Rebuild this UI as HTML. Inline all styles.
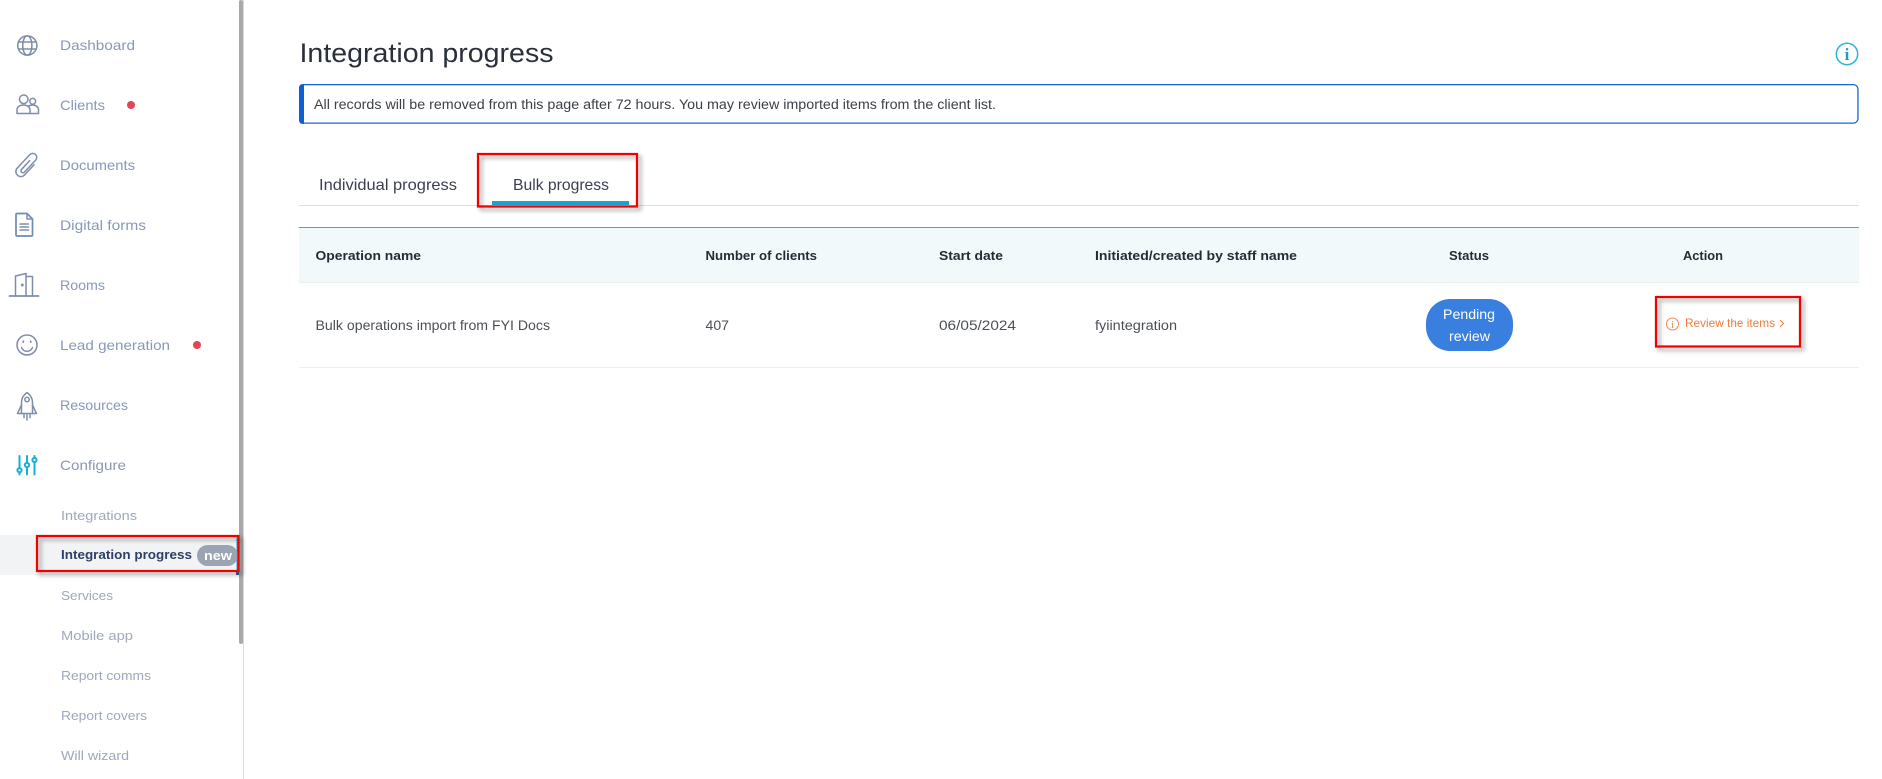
<!DOCTYPE html>
<html lang="en">
<head>
<meta charset="utf-8">
<title>Integration progress</title>
<style>
html,body{margin:0;padding:0;background:#fff;width:1882px;height:779px;overflow:hidden}
svg{display:block}
text{font-family:"Liberation Sans",sans-serif}
.n{font-size:14px;fill:#8899b5}
.s{font-size:13px;fill:#9ca8bc}
.h{font-size:13px;font-weight:bold;fill:#262c36}
.c{font-size:13.5px;fill:#4b4f57}
.i{fill:none;stroke:#7d8dac;stroke-width:1.500;stroke-linecap:round;stroke-linejoin:round}
.red{filter:drop-shadow(3px 3px 2px rgba(0,0,0,.38))}
</style>
</head>
<body>
<svg width="1882" height="779" viewBox="0 0 1882 779" xmlns="http://www.w3.org/2000/svg">
<rect width="1882" height="779" fill="#fff"/>

<!-- sidebar structure -->
<rect x="0" y="535" width="238" height="40" fill="#f1f3f5"/>
<rect x="243" y="0" width="1" height="779" fill="#d6d9e2"/>
<rect x="239" y="0" width="4" height="644" rx="2" fill="#a9a9a9"/>
<rect x="236.500" y="535" width="1.500" height="36" fill="#1aa9d4"/>
<rect x="236" y="571" width="3" height="4" fill="#3d5a8c"/>

<!-- sidebar icons -->
<g class="i">
  <circle cx="27.300" cy="45.500" r="9.600"/>
  <ellipse cx="27.300" cy="45.500" rx="4.600" ry="9.600"/>
  <path d="M18.500 42h17.600M18.500 49h17.600"/>

  <circle cx="23.700" cy="99.300" r="4.300"/>
  <circle cx="32.700" cy="101.300" r="2.900"/>
  <path d="M17 113.500v-3.500c0-3 2.500-5 6.500-5s6.500 2 6.500 5v3.500zM28 106.500c1.300-1 3-1.500 4.500-1.500 3.500 0 6 2 6 5v3.500H30"/>

  <g transform="translate(27 165) rotate(43)">
    <path d="M5 -5V9a5 5 0 0 1-10 0V-9.500a4 4 0 0 1 8 0V7a2 2 0 0 1-4 0V-5"/>
  </g>

  <path d="M17.500 213.500H27l5.500 5.500v16c0 .6-.4 1-1 1H17c-.6 0-1-.4-1-1v-20.500c0-.6.4-1 1.500-1z" stroke="#6f8ab5" stroke-width="1.700"/>
  <path d="M27 213.500v5.500h5.500M20 224h8.500M20 227h8.500M20 230h8.500"/>

  <path d="M9.500 296h29" stroke-width="1.800"/>
  <path d="M15.500 296v-20l10.500-2.500V296M26 276.500h6.500V296"/>
  <circle cx="22.300" cy="285" r=".7"/>

  <circle cx="27" cy="345" r="10"/>
  <path d="M21.500 347.500c1.200 2.700 3.300 3.800 5.500 3.800s4.300-1.100 5.500-3.800"/>
  <path d="M23.300 341.300v.8M30.700 341.300v.8" stroke-width="1.800"/>

  <path d="M27 392.500c3.500 2.500 5.500 6 5.500 10v11h-11v-11c0-4 2-7.500 5.500-10z"/>
  <circle cx="27" cy="399.500" r="2.200"/>
  <path d="M21.500 405l-4 8.500h4M32.500 405l4 8.500h-4M27 414.500v5.500M24 414.500v3M30 414.500v3"/>
</g>
<g fill="none" stroke="#1aaedb" stroke-width="2" stroke-linecap="round">
  <path d="M19.500 456v12M19.500 472.500v2M27 456v7M27 467.500v7M34.500 456v2M34.500 462.500v12"/>
  <circle cx="19.500" cy="470.200" r="2.100"/>
  <circle cx="27" cy="465" r="2.100"/>
  <circle cx="34.500" cy="460" r="2.100"/>
</g>

<!-- sidebar text -->
<text class="n" x="60" y="50" textLength="75" lengthAdjust="spacingAndGlyphs">Dashboard</text>
<text class="n" x="60" y="110" textLength="45" lengthAdjust="spacingAndGlyphs">Clients</text>
<circle cx="131" cy="105" r="4" fill="#df4656"/>
<text class="n" x="60" y="170" textLength="75" lengthAdjust="spacingAndGlyphs">Documents</text>
<text class="n" x="60" y="230" textLength="86" lengthAdjust="spacingAndGlyphs">Digital forms</text>
<text class="n" x="60" y="290" textLength="45" lengthAdjust="spacingAndGlyphs">Rooms</text>
<text class="n" x="60" y="350" textLength="110" lengthAdjust="spacingAndGlyphs">Lead generation</text>
<circle cx="197" cy="345" r="4" fill="#df4656"/>
<text class="n" x="60" y="410" textLength="68" lengthAdjust="spacingAndGlyphs">Resources</text>
<text class="n" x="60" y="470" textLength="66" lengthAdjust="spacingAndGlyphs">Configure</text>

<text class="s" x="61" y="520" textLength="76" lengthAdjust="spacingAndGlyphs">Integrations</text>
<text class="s" x="61" y="559" textLength="131" lengthAdjust="spacingAndGlyphs" style="fill:#2f4068;font-weight:bold">Integration progress</text>
<rect x="197" y="545" width="41" height="21" rx="10.500" fill="#9aa4b2"/>
<text x="204" y="560" font-size="13" font-weight="bold" fill="#fff" textLength="28" lengthAdjust="spacingAndGlyphs">new</text>
<text class="s" x="61" y="600" textLength="52" lengthAdjust="spacingAndGlyphs">Services</text>
<text class="s" x="61" y="640" textLength="72" lengthAdjust="spacingAndGlyphs">Mobile app</text>
<text class="s" x="61" y="680" textLength="90" lengthAdjust="spacingAndGlyphs">Report comms</text>
<text class="s" x="61" y="720" textLength="86" lengthAdjust="spacingAndGlyphs">Report covers</text>
<text class="s" x="61" y="760" textLength="68" lengthAdjust="spacingAndGlyphs">Will wizard</text>

<!-- heading -->
<text x="299.500" y="62" font-size="27" fill="#2a2f3c" textLength="254" lengthAdjust="spacingAndGlyphs">Integration progress</text>
<circle cx="1847" cy="54" r="10.700" fill="none" stroke="#2fb3dd" stroke-width="1.500"/>
<text x="1847" y="60" text-anchor="middle" font-size="17" font-weight="bold" fill="#1c9cc9" style="font-family:'Liberation Serif',serif">i</text>

<!-- alert -->
<rect x="299.650" y="84.650" width="1558.300" height="38.500" rx="4.500" fill="#fff" stroke="#1766d6" stroke-width="1.300"/>
<path d="M304 84v40h-1c-2.500 0-4-1.500-4-4V88c0-2.500 1.500-4 4-4z" fill="#0d5fd3"/>
<text x="314" y="109" font-size="13.500" fill="#3c4048" textLength="682" lengthAdjust="spacingAndGlyphs">All records will be removed from this page after 72 hours. You may review imported items from the client list.</text>

<!-- tabs -->
<rect x="299" y="205" width="1560" height="1" fill="#dedede"/>
<text x="319" y="190" font-size="16" fill="#3a404e" textLength="138" lengthAdjust="spacingAndGlyphs">Individual progress</text>
<text x="513" y="190" font-size="16" fill="#3a404e" textLength="96" lengthAdjust="spacingAndGlyphs">Bulk progress</text>
<rect x="492" y="201" width="137" height="4" fill="#17a5cd"/>

<!-- table -->
<rect x="299" y="228" width="1560" height="54" fill="#f2f9fb"/>
<rect x="299" y="227" width="1560" height="1" fill="#4aa5c5"/>
<rect x="299" y="282" width="1560" height="1" fill="#eceef0"/>
<rect x="299" y="367" width="1560" height="1" fill="#eceef0"/>

<text class="h" x="315.500" y="260" textLength="105.500" lengthAdjust="spacingAndGlyphs">Operation name</text>
<text class="h" x="705.500" y="260" textLength="111.500" lengthAdjust="spacingAndGlyphs">Number of clients</text>
<text class="h" x="939" y="260" textLength="64" lengthAdjust="spacingAndGlyphs">Start date</text>
<text class="h" x="1095" y="260" textLength="202" lengthAdjust="spacingAndGlyphs">Initiated/created by staff name</text>
<text class="h" x="1449" y="260" textLength="40" lengthAdjust="spacingAndGlyphs">Status</text>
<text class="h" x="1683" y="260" textLength="40" lengthAdjust="spacingAndGlyphs">Action</text>

<text class="c" x="315.500" y="330" textLength="234.500" lengthAdjust="spacingAndGlyphs">Bulk operations import from FYI Docs</text>
<text class="c" x="705.500" y="330" textLength="23.500" lengthAdjust="spacingAndGlyphs">407</text>
<text class="c" x="939" y="330" textLength="77" lengthAdjust="spacingAndGlyphs">06/05/2024</text>
<text class="c" x="1095" y="330" textLength="82" lengthAdjust="spacingAndGlyphs">fyiintegration</text>

<rect x="1426" y="299" width="87" height="52" rx="24" fill="#387fe0"/>
<text x="1443" y="319" font-size="14" fill="#fff" textLength="52" lengthAdjust="spacingAndGlyphs">Pending</text>
<text x="1449" y="341" font-size="14" fill="#fff" textLength="41" lengthAdjust="spacingAndGlyphs">review</text>

<circle cx="1672.500" cy="324" r="6" fill="none" stroke="#ef8a4c" stroke-width="1"/>
<text x="1672.500" y="328" text-anchor="middle" font-size="10" fill="#ee7d3c" style="font-family:'Liberation Serif',serif">i</text>
<text x="1685" y="327" font-size="12" fill="#ee7d3c" textLength="90" lengthAdjust="spacingAndGlyphs">Review the items</text>
<path d="M1780 320l3.500 3.500-3.500 3.500" fill="none" stroke="#ee7d3c" stroke-width="1"/>

<!-- red annotation boxes -->
<rect class="red" x="37" y="536" width="201.500" height="35" fill="none" stroke="#f00000" stroke-width="2.200"/>
<rect class="red" x="478" y="154" width="159" height="52.500" fill="none" stroke="#f00000" stroke-width="2.200"/>
<rect class="red" x="1656" y="297" width="144" height="49.500" fill="none" stroke="#f00000" stroke-width="2.200"/>
</svg>
</body>
</html>
